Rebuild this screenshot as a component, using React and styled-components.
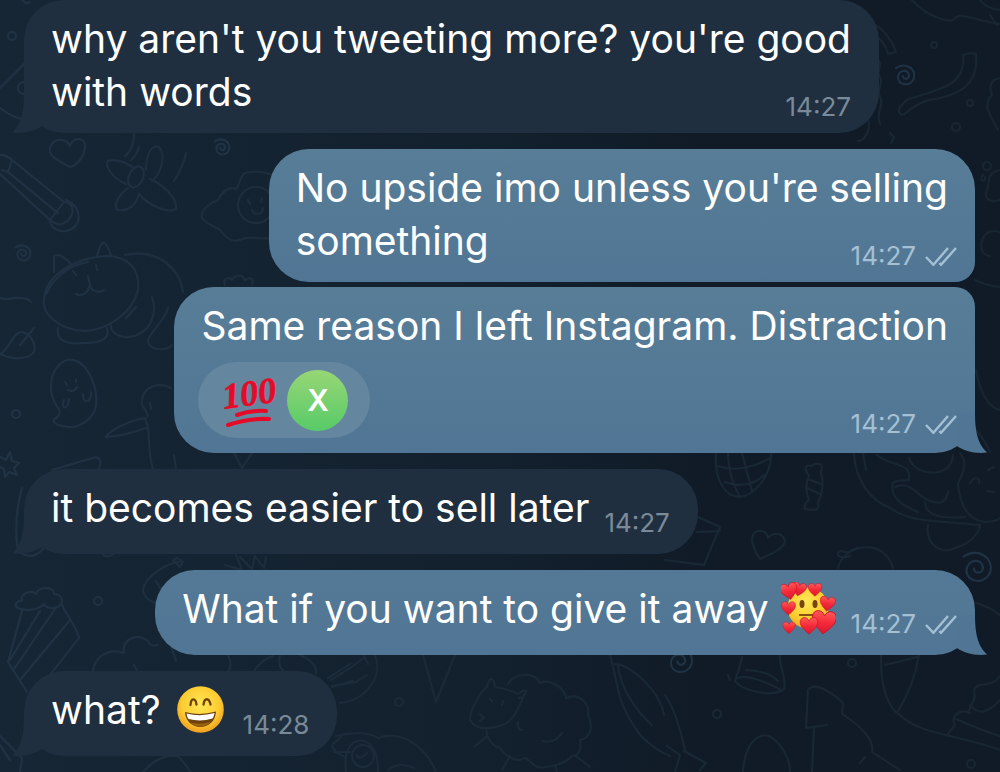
import React from "react";
import styled, { createGlobalStyle } from "styled-components";

const GlobalStyle = createGlobalStyle`
  * { box-sizing: border-box; }
  body { margin: 0; background: #111d29; }
`;

const Chat = styled.main`
  position: relative;
  min-height: 100vh;
  padding: 0 25px 16px 24px;
  overflow: hidden;
  background: linear-gradient(90deg, #162635 0%, #13212e 45%, #101b27 70%, #101b27 100%);
  color: #fff;
  font-family: Inter, "Liberation Sans", sans-serif;
  font-size: 39px;
  line-height: 53px;
`;

const Wallpaper = styled.svg`
  position: absolute;
  top: 0;
  left: 0;
  width: 100%;
  height: 100%;
  fill: none;
  stroke: url(#ink);
  stroke-width: 2;
  stroke-linecap: round;
  stroke-linejoin: round;
`;

const Thread = styled.ol`
  position: relative;
  display: flex;
  flex-direction: column;
  margin: 0;
  padding: 0;
  list-style: none;
`;

const Bubble = styled.li`
  position: relative;
  max-width: 100%;
  align-self: ${(p) => (p.$out ? "flex-end" : "flex-start")};
  margin-top: ${(p) => (p.$first ? 0 : p.$grouped ? 5 : 16)}px;
  padding: 12px ${(p) => (p.$out ? 18 : 28)}px ${(p) => (p.$single ? 20 : 15)}px 27px;
  border-radius: 40px ${(p) => (p.$grouped ? 20 : 40)}px ${(p) => (p.$joined ? 20 : 40)}px 40px;
  background: ${(p) => (p.$out ? `linear-gradient(${p.$single ? "#547996" : "#587d97"}, #517695)` : "#1f2f3f")};
`;

const TailShape = styled.svg`
  position: absolute;
  bottom: 0;
  width: 30px;
  height: 40px;
  fill: ${(p) => (p.$out ? "#517695" : "#1f2f3f")};
  ${(p) => (p.$out ? "right: -12px;" : "left: -12px; transform: scaleX(-1);")}
`;

const Line = styled.div`
  padding-right: ${(p) => (p.$out ? 9 : 0)}px;
  white-space: nowrap;
`;

const LastLine = styled.div`
  display: flex;
  align-items: center;
  justify-content: space-between;
  gap: 15px;
  margin-top: ${(p) => (p.$reactions ? 10 : 0)}px;
`;

const Words = styled.span`
  display: flex;
  align-items: center;
  gap: 12px;
  white-space: nowrap;
`;

const Meta = styled.span`
  display: flex;
  align-items: center;
  align-self: flex-end;
  gap: 9px;
  margin-bottom: ${(p) => (p.$raised ? -1 : -4)}px;
  font-size: 26px;
  line-height: 30px;
  color: ${(p) => (p.$out ? "#a4c0d4" : "#7b8a98")};
`;

const Ticks = styled.svg`
  width: 32px;
  height: 19px;
  fill: none;
  stroke: currentColor;
  stroke-width: 2.4;
`;

const Emoji = styled.svg`
  flex: none;
  width: 55px;
  height: 53px;
`;

const Reaction = styled.button`
  display: flex;
  align-items: center;
  gap: 7px;
  height: 76px;
  margin: 0 0 0 -3px;
  padding: 0 22px 0 26px;
  border: 0;
  border-radius: 38px;
  background: #64869f;
  cursor: pointer;
`;

const Avatar = styled.span`
  display: grid;
  place-items: center;
  width: 61px;
  height: 61px;
  border-radius: 50%;
  background: linear-gradient(#98d676, #57cb68);
  color: #fff;
  font-family: Inter, sans-serif;
  font-size: 30px;
  font-weight: 600;
  line-height: 36px;
`;

const HundredArt = styled.svg`
  width: 56px;
  height: 56px;
  overflow: visible;
  fill: #e60a28;
  stroke: #e60a28;
  stroke-linecap: round;
`;

function Tail({ out }) {
  return (
    <TailShape $out={out} viewBox="0 0 30 40" aria-hidden="true">
      <path d="M18 0C18 22 22 32 30 39.5C18 41 7 38 0 33V0Z" />
    </TailShape>
  );
}

function Stamp({ out, raised, children }) {
  return (
    <Meta $out={out} $raised={raised}>
      <time>{children}</time>
      {out && (
        <Ticks viewBox="0 0 32 19" role="img" aria-label="Read">
          <path d="M1 10L8.4 17.8L23 1M14.5 16L16 17.8L31 1" />
        </Ticks>
      )}
    </Meta>
  );
}

const HEART = "M0 10C-4 6-10 2-10-4C-10-10-2-11 0-5C2-11 10-10 10-4C10 2 4 6 0 10Z";

function Heart({ x, y, s, r = 0 }) {
  return (
    <path d={HEART} transform={`translate(${x} ${y}) rotate(${r}) scale(${s})`} fill="url(#heartRed)" stroke="#c9142a" strokeWidth="0.8" />
  );
}

function LovedFace() {
  return (
    <Emoji viewBox="0 0 55 53" role="img" aria-label="Smiling face with hearts">
      <defs>
        <radialGradient id="loveFace" cx="0.45" cy="0.35" r="0.7">
          <stop offset="0" stopColor="#ffe958" />
          <stop offset="0.65" stopColor="#fccb2b" />
          <stop offset="1" stopColor="#ee9b18" />
        </radialGradient>
        <linearGradient id="heartRed" x1="0" y1="0" x2="0" y2="1">
          <stop offset="0" stopColor="#ff5a58" />
          <stop offset="0.5" stopColor="#f32a39" />
          <stop offset="1" stopColor="#dc162c" />
        </linearGradient>
      </defs>
      <circle cx="27" cy="26" r="20.5" fill="url(#loveFace)" />
      <ellipse cx="21" cy="22" rx="2.5" ry="4" fill="#79450e" />
      <ellipse cx="34" cy="22" rx="2.5" ry="4" fill="#79450e" />
      <path d="M18 33H32" stroke="#79450e" strokeWidth="1.8" />
      <Heart x={18} y={7} s={0.7} r={12} />
      <Heart x={8} y={9} s={0.85} r={-12} />
      <Heart x={34} y={7.5} s={0.68} />
      <Heart x={7.5} y={26} s={0.7} />
      <Heart x={46.5} y={21.5} s={0.76} r={8} />
      <Heart x={8} y={45.5} s={0.62} />
      <Heart x={43} y={40} s={1.2} r={5} />
      <Heart x={28} y={43.5} s={0.88} />
    </Emoji>
  );
}

function GrinFace() {
  return (
    <Emoji viewBox="0 0 55 53" role="img" aria-label="Grinning face with smiling eyes">
      <defs>
        <radialGradient id="grinFace" cx="0.5" cy="0.4" r="0.62">
          <stop offset="0" stopColor="#ffe654" />
          <stop offset="0.65" stopColor="#fdcc32" />
          <stop offset="1" stopColor="#ee9a1d" />
        </radialGradient>
      </defs>
      <circle cx="27.5" cy="26.5" r="23.3" fill="url(#grinFace)" />
      <path d="M17.5 22C18 14.5 22.5 14.5 23.5 21.5M30.5 21.5C31.5 14.5 36 14.5 37.5 21.5" fill="none" stroke="#6d410c" strokeWidth="2.3" strokeLinecap="round" />
      <path d="M12 29Q27.5 33 43 28.5C42 49 13 49 12 29Z" fill="#6d410c" />
      <path d="M13.5 30.5Q27.5 34 41.5 30C41 33 40.5 34 39.5 35.5Q27.5 39 15.5 36Q14 34 13.5 30.5Z" fill="#fff" />
      <path d="M17.5 39.5Q27.5 42 37.5 39C33 45 22 45 17.5 39.5Z" fill="#9a6210" />
    </Emoji>
  );
}

function Hundred() {
  return (
    <HundredArt viewBox="0 0 56 56" role="img" aria-label="Hundred points">
      <text x="0" y="37" transform="rotate(-8 0 37)" fontFamily="'Liberation Serif', serif" fontSize="36" fontStyle="italic" fontWeight="700" strokeWidth="0.6">100</text>
      <path d="M13 43Q27 38 42 39" fill="none" strokeWidth="4" />
      <path d="M4 53Q25 46 45 47" fill="none" strokeWidth="4" />
    </HundredArt>
  );
}

const SWIRL = "M-9-7C0-13 11-7 9 3C6 12-7 11-7 2C-6-6 4-6 4 1C3 5-2 4-2 1";

function Swirl({ x, y, s = 1 }) {
  return <path d={SWIRL} transform={`translate(${x} ${y}) scale(${s})`} strokeWidth={2 / s} />;
}

function Doodles() {
  return (
    <Wallpaper viewBox="0 0 1000 772" preserveAspectRatio="xMinYMin slice" aria-hidden="true">
      <defs>
        <linearGradient id="ink" gradientUnits="userSpaceOnUse" x1="0" y1="0" x2="1000" y2="0">
          <stop offset="0" stopColor="#203345" />
          <stop offset="0.4" stopColor="#1a2a38" />
          <stop offset="1" stopColor="#182632" />
        </linearGradient>
      </defs>
      <circle cx="12" cy="36" r="4" />
      <path d="M24 64L0 88M0 108C8 114 16 119 24 119M24 82C16 82 16 94 24 94M22 0Q26 5 30 2" />
      <path d="M70 167C58 160 48 157 50 147C54 137 66 138 70 146C73 136 86 137 85 147C84 158 76 166 70 167Z" />
      <path d="M0 155C5 155 10 158 12 160L64 202L50 220L0 174M12 160L8 172L2 170M8 172L58 213M64 202C74 203 76 214 66 222C60 226 56 224 50 220M66 200C84 208 82 228 66 231C58 232 52 228 50 222" />
      <path d="M146 170C146 155 152 143 159 147C166 155 162 172 152 181M126 184C112 178 104 165 108 161C118 158 130 165 134 168M128 188C118 195 112 208 118 210C128 212 136 205 139 194M150 179C162 184 178 198 176 209C168 214 148 205 139 194M134 134C134 145 130 152 125 156M139 147Q137 155 131 160M186 153Q184 165 174 181" />
      <ellipse cx="136" cy="177" rx="7" ry="11" transform="rotate(25 136 177)" />
      <Swirl x={222} y={147} s={0.8} />
      <path d="M274 176C262 170 250 172 245 173C240 175 240 185 236 189C228 185 220 195 218 200C210 203 200 210 202 218C206 224 214 226 220 230C226 238 232 243 240 240C248 235 258 240 274 238M248 200L250 204M262 198L261 202M252 210C254 215 262 216 263 208" />
      <circle cx="256" cy="205" r="18" />

      <Swirl x={23} y={253} s={0.8} />
      <path d="M44 300C45 275 75 258 105 256C130 256 140 270 138 290C132 315 105 330 85 331C60 330 42 315 44 300ZM54 272L54 256Q60 252 71 264M97 256Q101 240 105 243Q110 250 111 256M46 294C56 274 70 265 88 262M88 276L90 285C88 293 82 297 76 294M90 286C92 292 100 293 104 290M73 271L76 275M96 265L97 270M125 255C160 248 180 270 183 292M152 297C158 315 150 330 135 336C120 340 110 332 111 325M136 307L126 318M168 308C165 320 152 330 148 340C148 350 165 352 172 345M58 328C56 340 65 345 85 343C102 343 110 338 107 328" />
      <path d="M0 298C8 302 12 296 20 298Q28 298 31 302M0 354C10 350 12 332 22 332C32 334 36 345 34 352C28 360 12 360 0 354M20 345L34 328M225 285C222 277 230 277 232 280C236 274 242 274 245 280C252 276 254 280 252 285" />
      <path d="M51 385C52 365 66 358 74 360C90 365 98 390 96 405C94 420 78 428 68 427C58 426 52 423 54 419C62 415 60 410 56 405C52 398 50 392 51 385ZM65 382L67 385M76 379L76 382M68 390Q74 393 77 387M64 400C60 408 68 412 69 399M83 394C82 404 92 404 91 392" />
      <circle cx="16" cy="414" r="4" />
      <path d="M0 457L6 460L10 452L12 461L19 463L14 468L17 475L9 472L5 477L4 469L0 467M142 405C140 385 160 382 171 388M142 405Q146 410 148 416M146 418C130 420 110 430 106 437C120 436 135 432 146 428M145 419C152 430 146 448 153 469M150 403L151 409M174 455L176 468M52 470L96 457Q104 460 98 470M234 453L242 468L252 453" />

      <path d="M22 488Q13 520 18 551Q32 562 44 548M102 553Q106 559 114 554" />
      <path d="M18 608C12 605 18 600 22 601C20 592 32 590 36 594C40 585 54 587 54 594C62 594 64 602 60 605C56 610 46 608 44 604C38 611 25 611 18 608ZM22 611L8 662L27 692M62 605C68 618 76 625 79 638L42 685M40 611L10 660M55 609L14 669M70 620L20 680" />
      <circle cx="98" cy="601" r="4" />
      <path d="M93 671C95 655 110 648 124 653C122 640 135 632 148 641C150 648 156 645 158 645M171 646L176 661M134 665L137 671M180 562C170 562 145 575 143 590C144 600 155 604 160 603M173 560L180 567L183 562L177 558ZM156 581L160 588M225 565L242 570L236 555M240 557L252 569L255 556L264 568L266 557M228 655Q233 664 228 673M253 673Q260 660 273 656M280 656Q277 669 287 673M300 655Q317 662 316 674M328 678L350 664M332 687L352 681M333 744L341 737M334 752L350 752" />
      <path d="M0 736L22 758L20 772M0 745L10 760M143 772C155 758 172 752 180 758L191 772" />

      <path d="M331 680L350 668L364 658M332 686L356 682L367 675M364 656L368 664M375 656C384 676 365 701 340 703M423 655L436 702L455 655" />
      <circle cx="399" cy="702" r="4" />
      <path d="M336 736C350 732 370 732 378 738C400 730 425 745 436 772M332 746Q337 755 346 757M346 772C340 730 380 730 378 772M357 755Q359 761 367 753M388 770Q400 761 414 768" />
      <circle cx="363" cy="756" r="11" />
      <path d="M487 687C480 692 470 710 470 720C475 730 490 730 505 724C515 718 520 705 524 695M487 687Q490 674 494 682L495 687C505 688 515 692 518 694Q527 688 526 692Q524 698 519 698M508 684C515 672 535 672 540 683C552 678 565 690 566 698C580 692 590 705 588 714C594 728 590 738 580 740C582 750 578 756 572 756C565 764 555 766 545 767C535 770 530 760 525 758C515 764 505 755 500 748C490 745 485 735 487 728M486 737L475 746M510 756L502 770M555 765L557 772M576 756L590 767M542 741Q555 744 562 733M518 722Q517 730 522 730M480 714L484 718L480 721M490 699L492 701M503 701L502 705" />
      <path d="M610 655C620 690 615 700 640 735Q655 750 670 756M615 664C630 665 660 690 664 715M618 665C620 690 640 715 652 725M665 695Q676 710 685 750M667 746L680 755L675 772M684 751L706 763L700 770" />

      <path d="M716 453C714 480 725 497 740 497C755 495 772 475 771 453M728 453C728 470 733 485 740 497M742 453L752 491M718 466C735 472 755 467 770 458M725 482C740 488 755 484 764 475M698 517L720 527L704 565L665 560M697 532L720 531" />
      <path d="M809 475C803 468 806 464 811 466C818 462 824 463 821 472C824 484 822 496 818 502C820 512 815 510 805 509C804 505 806 502 809 500C805 491 806 483 809 475ZM808 479L821 484M807 488L820 494" />
      <path d="M760 559C754 550 749 540 754 533C760 528 767 532 768 538C774 531 784 533 785 542C781 551 768 555 760 559Z" />
      <path d="M838 568C843 545 884 536 893 568M850 556C838 560 834 552 842 551C850 555 850 549 858 548M854 453C855 480 870 500 890 508C910 522 930 520 980 525M863 453L866 470M877 455C890 467 912 461 909 480C900 482 898 478 893 483C890 495 898 504 918 512M909 458C914 476 952 480 953 455M960 453C970 466 960 476 958 484C960 505 967 520 985 522Q995 522 1000 518M895 487C910 480 916 495 928 500C940 505 946 503 948 492M925 502C925 520 955 518 965 517M928 525C925 545 942 555 955 548C970 544 980 533 980 524M970 483C975 475 981 479 979 483M987 491L994 492M988 470L994 467" />
      <Swirl x={977} y={567} s={1.5} />
      <Swirl x={680} y={660} s={1.3} />
      <path d="M742 657C740 668 736 677 735 681C742 691 773 698 784 689C787 679 778 662 780 655M736 679C745 672 775 686 781 690M728 675L730 680M746 670Q768 671 778 681" />
      <circle cx="852" cy="663" r="4" />
      <circle cx="717" cy="714" r="4" />
      <path d="M806 728L808 690C815 680 835 695 843 703L842 714C860 725 875 740 872 752L900 770M806 728L827 725M814 728L812 772M743 772C745 740 762 728 775 740C785 750 790 760 790 772M860 763L865 757" />
      <path d="M881 655C880 690 890 710 900 715C920 735 960 735 1000 750M919 655C915 680 905 700 897 713M885 665L917 657M976 603Q990 607 1000 615M1000 676C990 690 978 680 974 690C978 702 966 708 970 713C960 709 950 715 955 725L947 735M956 719Q980 730 1000 736M970 705Q982 720 1000 700" />
      <circle cx="971" cy="764" r="4" />

      <circle cx="934" cy="45" r="3" />
      <circle cx="970" cy="103" r="3" />
      <circle cx="956" cy="127" r="4" />
      <path d="M963 55Q970 52 976 54C979 85 960 95 930 100C915 103 908 112 903 115C895 113 900 105 907 100C930 90 967 90 963 55M876 25Q890 35 896 52L888 54Q885 42 876 36M878 60C884 65 875 70 880 77C884 84 876 90 880 97C885 105 875 110 880 124M912 0C925 15 945 22 953 20C960 10 970 20 1000 24M980 0Q985 8 1000 10M990 15L997 25M890 133L894 137L891 143M868 120C872 130 864 141 858 141" />
      <Swirl x={905} y={75} />
      <path d="M1000 78C988 80 990 90 992 95C982 105 990 115 998 130M1000 170C985 173 990 184 987 190C982 202 995 202 1000 200M983 175C978 181 986 183 985 177M1000 232C980 225 975 255 990 256M975 280Q985 285 1000 287" />
      <circle cx="987" cy="166" r="4" />
      <path d="M976 370C980 395 990 408 1000 410M976 430Q985 440 990 452" />
    </Wallpaper>
  );
}

export default function App() {
  return (
    <>
      <GlobalStyle />
      <Chat>
        <Doodles />
        <Thread>
          <Bubble $first>
            <Line>why aren't you tweeting more? you're good</Line>
            <LastLine>
              <Words>with words</Words>
              <Stamp>14:27</Stamp>
            </LastLine>
            <Tail />
          </Bubble>
          <Bubble $out $joined>
            <Line $out>No upside imo unless you're selling</Line>
            <LastLine>
              <Words>something</Words>
              <Stamp out>14:27</Stamp>
            </LastLine>
          </Bubble>
          <Bubble $out $grouped>
            <Line $out>Same reason I left Instagram. Distraction</Line>
            <LastLine $reactions>
              <Reaction type="button">
                <Hundred />
                <Avatar>X</Avatar>
              </Reaction>
              <Stamp out raised>14:27</Stamp>
            </LastLine>
            <Tail out />
          </Bubble>
          <Bubble $single>
            <LastLine>
              <Words>it becomes easier to sell later</Words>
              <Stamp>14:27</Stamp>
            </LastLine>
            <Tail />
          </Bubble>
          <Bubble $out $single>
            <LastLine>
              <Words>
                What if you want to give it away
                <LovedFace />
              </Words>
              <Stamp out>14:27</Stamp>
            </LastLine>
            <Tail out />
          </Bubble>
          <Bubble $single>
            <LastLine>
              <Words>
                what?
                <GrinFace />
              </Words>
              <Stamp>14:28</Stamp>
            </LastLine>
            <Tail />
          </Bubble>
        </Thread>
      </Chat>
    </>
  );
}
